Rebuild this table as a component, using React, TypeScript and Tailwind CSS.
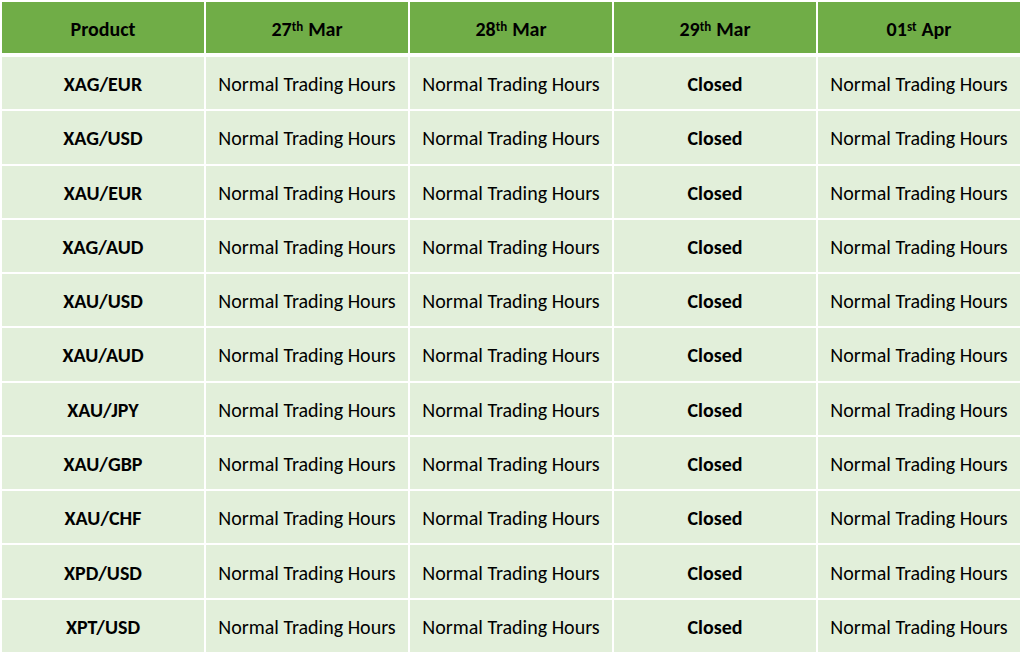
const products = [
  "XAG/EUR",
  "XAG/USD",
  "XAU/EUR",
  "XAG/AUD",
  "XAU/USD",
  "XAU/AUD",
  "XAU/JPY",
  "XAU/GBP",
  "XAU/CHF",
  "XPD/USD",
  "XPT/USD",
];

const headers: { day: string; sup: string; month: string }[] = [
  { day: "27", sup: "th", month: "Mar" },
  { day: "28", sup: "th", month: "Mar" },
  { day: "29", sup: "th", month: "Mar" },
  { day: "01", sup: "st", month: "Apr" },
];

const cellClass =
  "flex items-center justify-center bg-[#e2efda] pt-[2px] text-[20px] text-black";

const headClass =
  "flex items-center justify-center bg-[#70ad47] pt-[3px] text-[20px] font-bold text-black";

export default function App() {
  return (
    <div
      className="h-[655px] w-[1024px] bg-white pl-[2px] pt-[2px]"
      style={{ fontFamily: "Carlito, Lato, 'Open Sans', sans-serif" }}
    >
      <div className="w-[1018px]">
        <div className="grid h-[51px] grid-cols-5 gap-x-[2px]">
          <div className={headClass}>Product</div>
          {headers.map((h) => (
            <div key={h.day} className={headClass}>
              {h.day}
              <sup className="relative -top-[2px] text-[13px] font-bold">
                {h.sup}
              </sup>
              <span className="ml-[5px]">{h.month}</span>
            </div>
          ))}
        </div>
        <div className="mt-[4px] grid h-[595px] grid-cols-5 grid-rows-11 gap-[2px]">
          {products.map((p) => (
            <div key={p} className="contents">
              <div className={`${cellClass} font-bold`}>{p}</div>
              <div className={cellClass}>Normal Trading Hours</div>
              <div className={cellClass}>Normal Trading Hours</div>
              <div className={`${cellClass} font-bold`}>Closed</div>
              <div className={cellClass}>Normal Trading Hours</div>
            </div>
          ))}
        </div>
      </div>
    </div>
  );
}
